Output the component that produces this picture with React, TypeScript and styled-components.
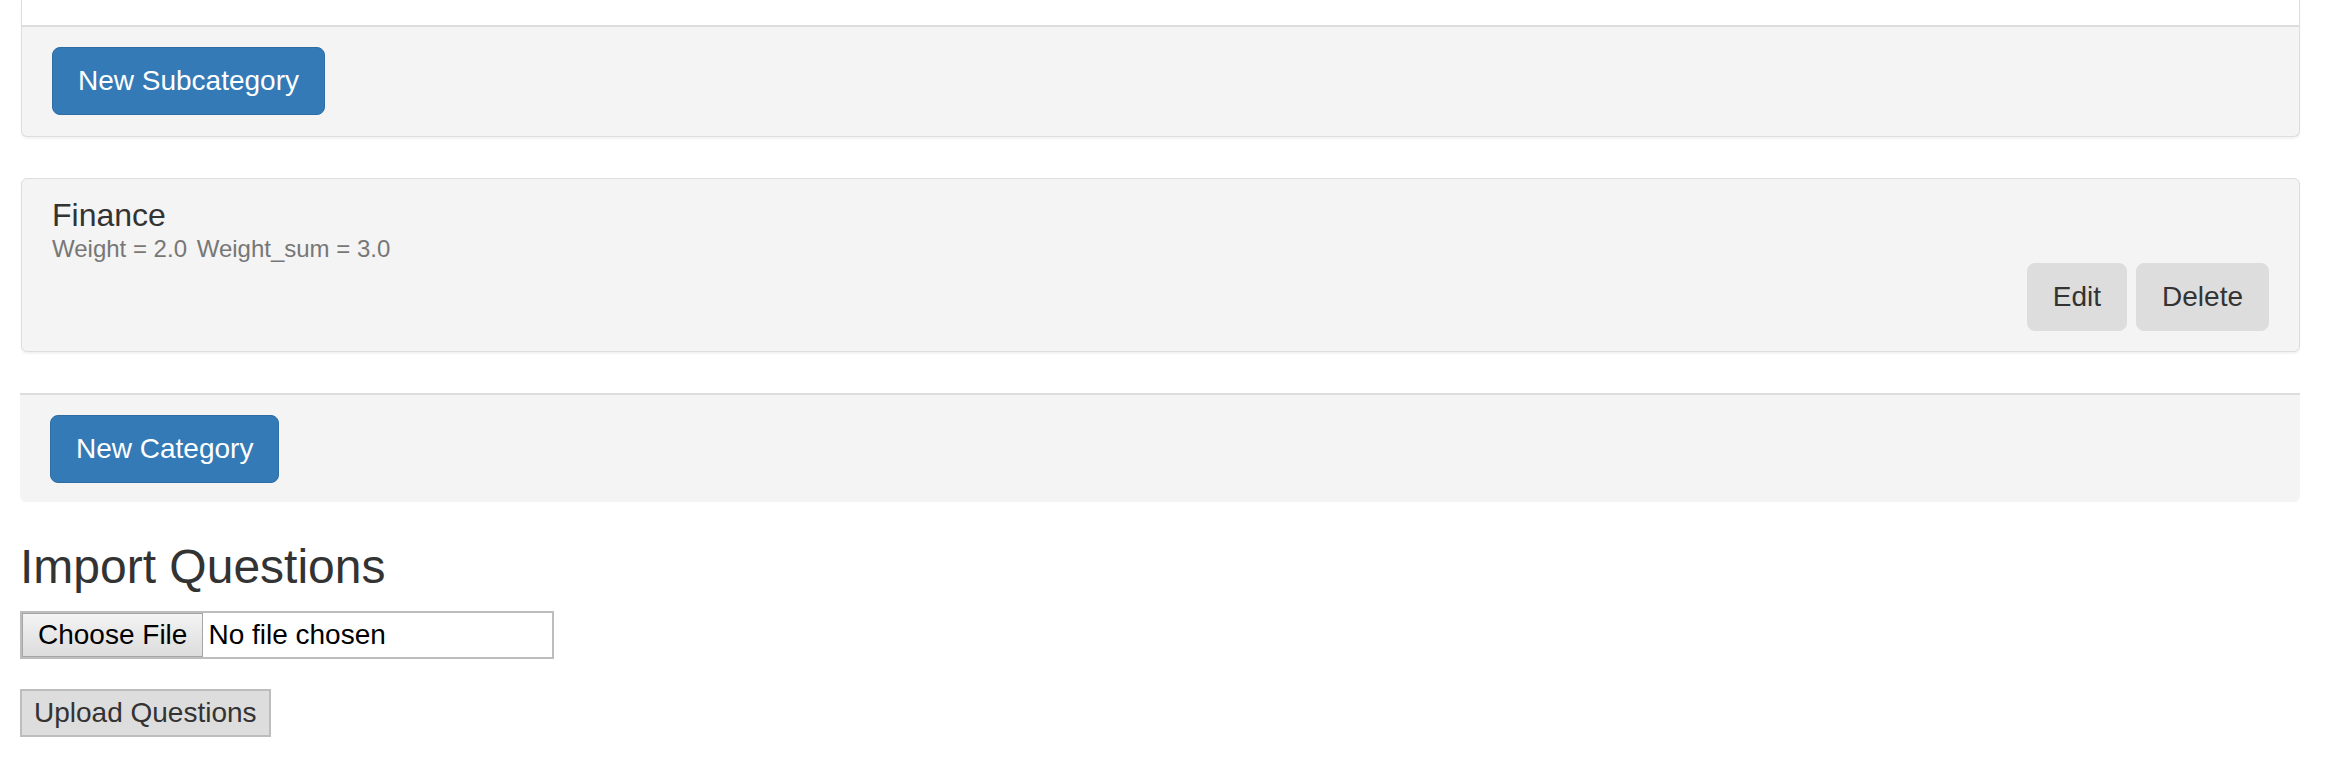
import React from 'react';
import styled, {createGlobalStyle} from 'styled-components';

const GlobalStyle = createGlobalStyle`
  body {
    margin: 0;
    background: #fff;
    color: #333;
    font-family: 'Liberation Sans', Arial, sans-serif;
  }
`

const Page = styled.div`
  padding: 0 28px 0 20px;
`

const Panel = styled.div<{ $cut?: boolean; $gap?: number }>`
  margin: ${p => p.$gap ?? 0}px 0 0 1px;
  border: 1px solid #ddd;
  border-top: ${p => (p.$cut ? 'none' : '1px solid #ddd')};
  border-radius: ${p => (p.$cut ? '0 0 6px 6px' : '6px')};
  background: #f4f4f4;
  box-shadow: 0 2px 2px rgba(0, 0, 0, 0.05);
`

const PanelTop = styled.div`
  height: 25px;
  background: #fff;
`

const PanelFooter = styled.div`
  border-top: 2px solid #ddd;
  padding: 20px 30px 21px;
`

const PanelBody = styled.div`
  display: flex;
  flex-direction: column;
  padding: 20px 30px 20px 30px;
`

const Title = styled.div`
  font-size: 32px;
  line-height: 32px;
  color: #333;
`

const Meta = styled.div`
  margin-top: 4px;
  font-size: 24px;
  line-height: 28px;
  color: #777;

  span + span {
    margin-left: 3px;
  }
`

const Actions = styled.div`
  display: flex;
  justify-content: flex-end;
  gap: 9px;
`

const Button = styled.button<{ $variant?: 'primary' | 'default' }>`
  display: inline-flex;
  align-items: center;
  height: 68px;
  padding: 0 25px;
  border: 1px solid ${p => (p.$variant === 'primary' ? '#2e6da4' : '#ddd')};
  border-radius: 8px;
  background: ${p => (p.$variant === 'primary' ? '#337ab7' : '#ddd')};
  color: ${p => (p.$variant === 'primary' ? '#fff' : '#333')};
  font-family: 'Liberation Sans', Arial, sans-serif;
  font-size: 28px;
  cursor: pointer;
`

const Well = styled.div`
  margin-top: 41px;
  border-top: 2px solid #ddd;
  border-radius: 0 0 6px 6px;
  background: #f4f4f4;
  padding: 20px 30px 19px;
`

const Heading = styled.h2`
  margin: 38px 0 0;
  font-size: 48px;
  line-height: 53px;
  font-weight: 400;
  color: #333;
`

const FileBox = styled.label`
  display: flex;
  align-items: center;
  box-sizing: border-box;
  width: 534px;
  height: 48px;
  margin-top: 18px;
  border: 2px solid #bdbdbd;
  background: #fff;
  font-size: 28px;
  color: #000;
`

const ChooseButton = styled.span`
  display: flex;
  align-items: center;
  box-sizing: border-box;
  height: 44px;
  padding: 0 15px;
  border: 1px solid #a6a6a6;
  background: linear-gradient(#f4f4f4, #dcdcdc);
`

const FileName = styled.span`
  margin-left: 5px;
`

const UploadButton = styled.button`
  display: block;
  box-sizing: border-box;
  height: 48px;
  margin-top: 30px;
  padding: 0 12px;
  border: 2px solid #bdbdbd;
  background: #ddd;
  color: #333;
  font-family: 'Liberation Sans', Arial, sans-serif;
  font-size: 28px;
`

export default function App() {
  return (
    <Page>
      <GlobalStyle />
      <Panel $cut>
        <PanelTop />
        <PanelFooter>
          <Button $variant='primary'>New Subcategory</Button>
        </PanelFooter>
      </Panel>

      <Panel $gap={41}>
        <PanelBody>
          <Title>Finance</Title>
          <Meta>
            <span>Weight = 2.0</span> <span>Weight_sum = 3.0</span>
          </Meta>
          <Actions>
            <Button>Edit</Button>
            <Button>Delete</Button>
          </Actions>
        </PanelBody>
      </Panel>

      <Well>
        <Button $variant='primary'>New Category</Button>
      </Well>

      <Heading>Import Questions</Heading>
      <FileBox>
        <ChooseButton>Choose File</ChooseButton>
        <FileName>No file chosen</FileName>
      </FileBox>
      <UploadButton>Upload Questions</UploadButton>
    </Page>
  )
}
